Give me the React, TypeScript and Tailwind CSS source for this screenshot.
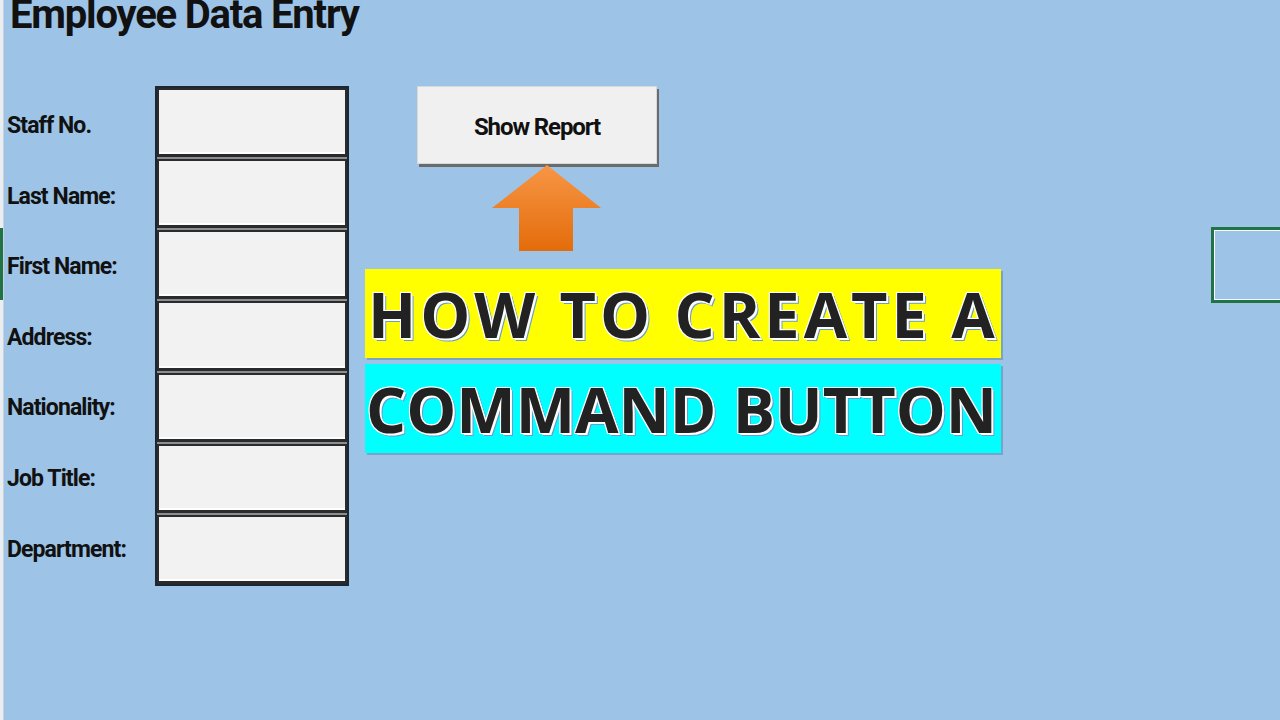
const labels = ["Staff No.", "Last Name:", "First Name:", "Address:", "Nationality:", "Job Title:", "Department:"];

const narrow = { fontFamily: 'Roboto, "Liberation Sans", Arial, sans-serif' };
const banner = { fontFamily: '"Open Sans", "Noto Sans", sans-serif' };

export default function App() {
    return (
        <div className="w-[1280px] h-[720px] overflow-hidden bg-[#9dc3e6] flex relative" style={narrow}>
            {/* sheet edge */}
            <div className="w-[4px] h-full bg-[#e9eef3] border-r border-[#c8d2dc] relative">
                <div className="absolute left-0 top-[228px] w-[3px] h-[72px] bg-[#217346]" />
            </div>

            <div className="flex-1 flex flex-col">
                <h1 className="text-[40px] font-bold leading-none text-[#111] ml-[6px] -mt-[5px] tracking-[-1.2px] whitespace-nowrap">Employee Data Entry</h1>

                <div className="flex mt-[51px]">
                    {/* labels */}
                    <div className="w-[151px] flex flex-col pt-[5px]">
                        {labels.map((l) => (
                            <div key={l} className="h-[70.6px] flex items-center pl-[3px] text-[23px] font-bold text-[#111] tracking-[-0.9px]">
                                {l}
                            </div>
                        ))}
                    </div>

                    {/* input boxes */}
                    <div className="w-[194px] border-2 border-[#1c2733] bg-[#8a8f94] flex flex-col gap-[2px] h-[500px]">
                        {labels.map((l) => (
                            <div key={l} className="flex-1 border-2 border-[#2b2b2b] border-b-[3px] bg-[#f2f2f2] shadow-[inset_0_-2px_0_#ffffff]" />
                        ))}
                    </div>

                    {/* button and banners */}
                    <div className="flex flex-col ml-[16px]">
                        <div className="ml-[52px] flex flex-col items-center w-[240px]">
                            <button className="w-[240px] h-[78px] bg-[#f0f0f0] border border-[#d8d8d8] shadow-[2px_3px_0_#6b6b6b] text-[24px] font-bold text-[#111] tracking-[-1.1px] pt-[4px]" style={narrow}>
                                Show Report
                            </button>
                            <svg width="110" height="88" viewBox="0 0 110 88" className="mt-[1px] ml-[20px]">
                                <defs>
                                    <linearGradient id="og" x1="0" y1="0" x2="0" y2="1">
                                        <stop offset="0" stopColor="#f79646" />
                                        <stop offset="1" stopColor="#e46c0a" />
                                    </linearGradient>
                                </defs>
                                <polygon points="55,0 109,43 81,43 81,86 27,86 27,43 0,43" fill="url(#og)" />
                            </svg>
                        </div>

                        <div className="mt-[16px] flex flex-col gap-[6px]" style={banner}>
                            <div className="w-[636px] h-[89px] bg-[#ffff00] flex items-center pl-[3px] text-[63px] font-bold text-[#222] leading-none whitespace-nowrap tracking-[4px] shadow-[2px_2px_0_#7aa3c8] [text-shadow:2px_2px_0_#ffffff,-1px_-1px_0_#ffffff,1px_-1px_0_#ffffff,-1px_1px_0_#ffffff,3px_3px_0_#6a9ccc]">
                                HOW TO CREATE A
                            </div>
                            <div className="w-[636px] h-[89px] bg-[#00ffff] flex items-center pl-[1px] text-[63px] font-bold text-[#222] leading-none whitespace-nowrap shadow-[2px_2px_0_#7aa3c8] [text-shadow:2px_2px_0_#ffffff,-1px_-1px_0_#ffffff,1px_-1px_0_#ffffff,-1px_1px_0_#ffffff,3px_3px_0_#6a9ccc]">
                                COMMAND BUTTON
                            </div>
                        </div>
                    </div>
                </div>
            </div>

            {/* selected cell */}
            <div className="absolute left-[1211px] top-[227px] w-[80px] h-[76px] border-[3px] border-[#217346] shadow-[inset_0_0_0_1px_#ffffff]" />
        </div>
    );
}
